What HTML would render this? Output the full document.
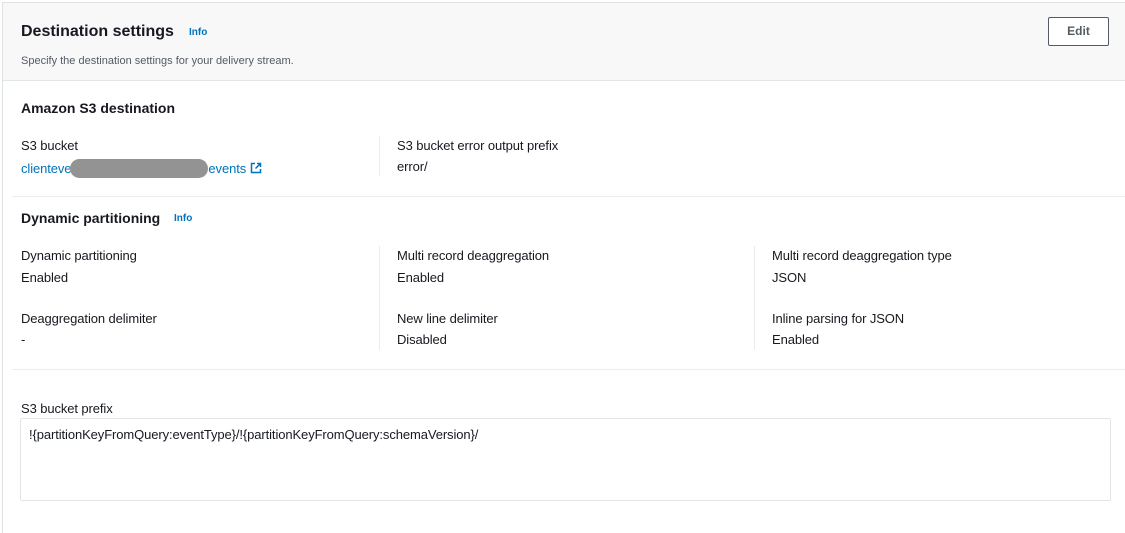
<!DOCTYPE html>
<html><head><style>
body{margin:0;width:1125px;height:525px;background:#fff;font-family:"Liberation Sans",sans-serif;color:#16191f;position:relative;overflow:hidden}
.a{position:absolute;white-space:nowrap}
.lbl{font-size:13px;color:#16191f;letter-spacing:-0.1px}
.val{font-size:13px;color:#16191f;letter-spacing:-0.1px}
.h{font-size:14px;font-weight:bold}
.info{font-size:10px;font-weight:bold;color:#0073bb}
.vl{position:absolute;width:1px;background:#eaeded}
.hl{position:absolute;height:1px;background:#eaeded}
</style></head><body>
<div style="position:absolute;left:2px;top:2px;width:1130px;height:530px;border-left:1px solid #dfe3e3;border-top:1px solid #dfe3e3"></div>
<div style="position:absolute;left:3px;top:3px;width:1122px;height:77px;background:#f8f8f8;border-bottom:1px solid #e3e6e6"></div>
<div class="a" style="left:21px;top:23px;font-size:16px;font-weight:bold">Destination settings</div>
<div class="a info" style="left:189px;top:27px">Info</div>
<div class="a" style="left:21px;top:55px;font-size:11px;color:#545b64">Specify the destination settings for your delivery stream.</div>
<div class="a" style="left:1048px;top:17px;width:59px;height:27px;border:1px solid #545b64;border-radius:2px;background:#fff;text-align:center;line-height:27px;font-size:12px;font-weight:bold;color:#545b64">Edit</div>

<div class="a h" style="left:21px;top:100px">Amazon S3 destination</div>
<div class="a lbl" style="left:21px;top:138px">S3 bucket</div>
<div class="a val" style="left:21px;top:159px;color:#0073bb">clienteve<span style="display:inline-block;width:138px;height:19px;background:#939393;border-radius:10px;vertical-align:-5px;margin:0 0 0 -1px"></span>events <svg width="12" height="12" viewBox="0 0 12 12" style="vertical-align:-1px"><path d="M5 1.5H1.5v9h9V7M7 1.5h3.5V5M10.5 1.5L5.5 6.5" fill="none" stroke="#0073bb" stroke-width="1.5"/></svg></div>
<div class="vl" style="left:379px;top:136px;height:40px"></div>
<div class="a lbl" style="left:397px;top:138px">S3 bucket error output prefix</div>
<div class="a val" style="left:397px;top:159px">error/</div>
<div class="hl" style="left:12px;top:196px;width:1113px"></div>

<div class="a h" style="left:21px;top:210px">Dynamic partitioning</div>
<div class="a info" style="left:174px;top:213px">Info</div>
<div class="vl" style="left:379px;top:246px;height:104px"></div>
<div class="vl" style="left:754px;top:246px;height:104px"></div>
<div class="a lbl" style="left:21px;top:248px">Dynamic partitioning</div>
<div class="a val" style="left:21px;top:270px">Enabled</div>
<div class="a lbl" style="left:397px;top:248px">Multi record deaggregation</div>
<div class="a val" style="left:397px;top:270px">Enabled</div>
<div class="a lbl" style="left:772px;top:248px">Multi record deaggregation type</div>
<div class="a val" style="left:772px;top:270px">JSON</div>
<div class="a lbl" style="left:21px;top:311px">Deaggregation delimiter</div>
<div class="a val" style="left:21px;top:332px">-</div>
<div class="a lbl" style="left:397px;top:311px">New line delimiter</div>
<div class="a val" style="left:397px;top:332px">Disabled</div>
<div class="a lbl" style="left:772px;top:311px">Inline parsing for JSON</div>
<div class="a val" style="left:772px;top:332px">Enabled</div>
<div class="hl" style="left:12px;top:369px;width:1113px"></div>

<div class="a lbl" style="left:21px;top:401px">S3 bucket prefix</div>
<div style="position:absolute;left:20px;top:418px;width:1089px;height:81px;border:1px solid #e3e6e6;border-radius:2px"></div>
<div class="a val" style="left:29px;top:427px">!{partitionKeyFromQuery:eventType}/!{partitionKeyFromQuery:schemaVersion}/</div>
</body></html>
